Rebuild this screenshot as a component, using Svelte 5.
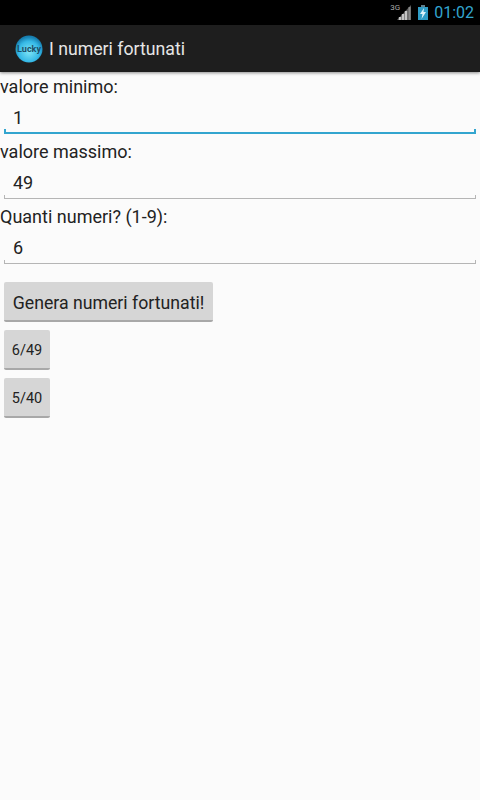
<script>
  let minimo = "1";
  let massimo = "49";
  let quanti = "6";
</script>

<div class="status">
  <small class="net">3G</small>
  <svg class="signal" width="14" height="15" viewBox="0 0 14 15">
    <polygon points="14,0 14,15 0,15" fill="#5a5a5a" />
    <path d="M3 12 V15 M6 9 V15 M9 6 V15" stroke="#c4c4c4" stroke-width="2.4" />
    <path d="M12.5 2 V15" stroke="#8a8a8a" stroke-width="2" />
  </svg>
  <svg class="battery" width="10" height="15" viewBox="0 0 10 15">
    <rect x="3" y="0" width="4" height="2" fill="#5f7f8c" />
    <rect x="0" y="2" width="10" height="13" fill="#2f9cc6" />
    <polygon points="6,3 2,9 4.5,9 3.5,14 8,7 5.5,7" fill="#dff3fa" />
  </svg>
  <span class="time">01:02</span>
</div>

<header class="actionbar">
  <svg class="logo" width="28" height="28" viewBox="0 0 28 28">
    <defs>
      <radialGradient id="ball" cx="0.5" cy="0.6" r="0.55">
        <stop offset="0" stop-color="#7fe6f7" />
        <stop offset="0.7" stop-color="#35b8e6" />
        <stop offset="1" stop-color="#177fb0" />
      </radialGradient>
    </defs>
    <circle cx="14" cy="14" r="13.5" fill="url(#ball)" />
    <text x="14" y="16.5" text-anchor="middle" class="lucky">Lucky</text>
  </svg>
  <span class="title">I numeri fortunati</span>
</header>

<main>
  <label for="min">valore minimo:</label>
  <div class="field focus">
    <input id="min" type="text" bind:value={minimo} />
  </div>

  <label for="max">valore massimo:</label>
  <div class="field">
    <input id="max" type="text" bind:value={massimo} />
  </div>

  <label for="qty">Quanti numeri? (1-9):</label>
  <div class="field">
    <input id="qty" type="text" bind:value={quanti} />
  </div>

  <div class="buttons">
    <button class="big">Genera numeri fortunati!</button>
    <button>6/49</button>
    <button>5/40</button>
  </div>
</main>

<style>
:global(body){
    background:#fbfbfb;
    font-family:"Roboto", "Liberation Sans", sans-serif;
    height:800px;
    overflow:hidden;
}

.status{
    height:25px;
    background:#000;
    display:flex;
    align-items:center;
    justify-content:flex-end;
    padding-right:6px;
}

.net{
    font-size:8px;
    color:#aaa;
    align-self:flex-start;
    margin-top:3px;
    margin-right:-3px;
}

.signal{
    margin-right:7px;
}

.battery{
    margin-right:6px;
}

.time{
    color:#33a5cf;
    font-size:16px;
}

.actionbar{
    height:47px;
    background:#1e1e1e;
    display:flex;
    align-items:center;
    padding-left:15px;
    gap:6px;
    box-shadow:0 1px 3px rgba(0,0,0,0.45);
}

.lucky{
    font-size:9px;
    font-weight:700;
    fill:#1d4f68;
}

.title{
    color:#e6e6e6;
    font-size:17.7px;
}

main{
    display:flex;
    flex-direction:column;
}

label{
    font-size:18px;
    line-height:21px;
    color:#222;
    padding-top:4px;
}

.field{
    position:relative;
    box-sizing:border-box;
    margin:0 4px 3px;
    height:37px;
    border-bottom:1px solid #b5b5b5;
}

.field.focus{
    border-bottom:2px solid #33a5cf;
}

/* holo edit text end ticks */
.field::before,
.field::after{
    content:"";
    position:absolute;
    bottom:0;
    width:1px;
    height:3px;
    background:#b5b5b5;
}

.field::before{
    left:0;
}

.field::after{
    right:0;
}

.field.focus::before,
.field.focus::after{
    width:2px;
    background:#33a5cf;
}

input{
    box-sizing:border-box;
    width:100%;
    height:100%;
    padding:5px 9px 0;
    border:none;
    border-radius:0;
    background:transparent;
    outline:none;
    font-family:inherit;
    font-size:18px;
    color:#222;
}

.buttons{
    display:flex;
    flex-direction:column;
    align-items:flex-start;
    gap:8px;
    padding:15px 4px 0;
}

button{
    width:46px;
    height:40px;
    padding:3px 0 0;
    border:none;
    border-bottom:2px solid #a8a8a8;
    border-radius:2px;
    background:#d6d6d6;
    font-family:inherit;
    font-size:14.5px;
    color:#222;
}

button.big{
    width:209px;
    font-size:17.7px;
}
</style>
